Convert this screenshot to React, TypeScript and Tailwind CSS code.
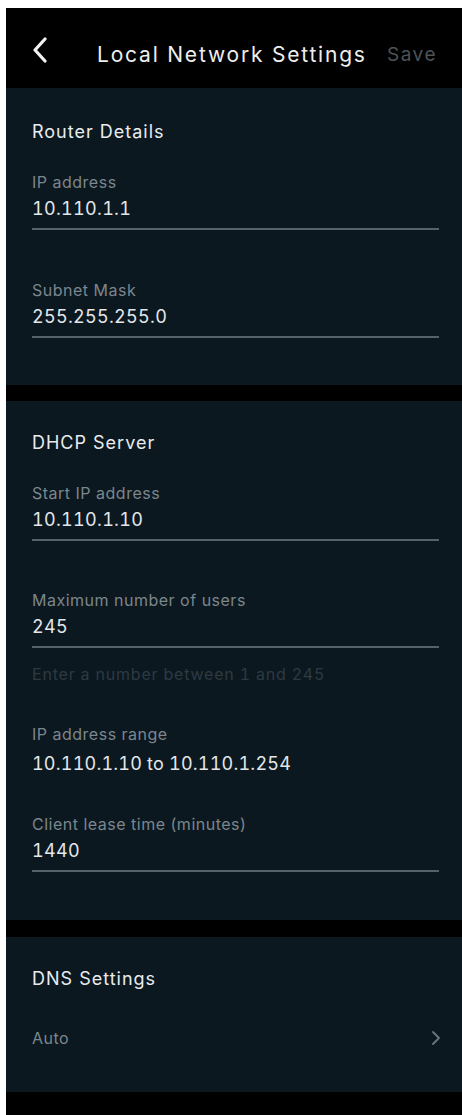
import type { ReactNode } from 'react';

const FONT = { fontFamily: 'Inter, "Noto Sans", Arial, sans-serif' };

function Field({ label, value }: { label: string; value: string }) {
  return (
    <div>
      <div className="text-[16px] leading-[20px] tracking-[0.5px] text-[#7c868d]">{label}</div>
      <div className="mt-[5px] text-[18px] leading-[24px] tracking-[0.3px] tabular-nums text-[#e4e7ea]">{value}</div>
      <div className="mt-[7px] h-[2px] bg-[#56626a]" />
    </div>
  );
}

function Section({ children, className }: { children: ReactNode; className: string }) {
  return <section className={`bg-[#0b1820] pl-[26px] pr-[23px] ${className}`}>{children}</section>;
}

function SectionTitle({ children }: { children: ReactNode }) {
  return <h2 className="text-[18px] leading-[22px] tracking-[1px] text-[#e9ecee]">{children}</h2>;
}

export default function App() {
  return (
    <div className="min-h-[1115px] bg-white pl-[6px] pt-[8px]" style={FONT}>
      <div className="bg-black pb-[23px]">
        <header className="h-[80px] flex items-center pl-[25px] pr-[25px] pt-[14px]">
          <svg width="18" height="26" viewBox="0 0 18 26" fill="none" className="shrink-0 mt-[-11px]">
            <path d="M14 2 L4 13 L14 24" stroke="#f2f2f2" strokeWidth="3.2" strokeLinecap="round" strokeLinejoin="round" />
          </svg>
          <h1 className="ml-[48px] text-[21px] leading-[28px] tracking-[1.8px] text-[#eeeeee]">Local Network Settings</h1>
          <span className="ml-auto text-[19px] leading-[28px] tracking-[1.5px] text-[#4d5358]">Save</span>
        </header>

        <Section className="h-[297px] pt-[33px]">
          <SectionTitle>Router Details</SectionTitle>
          <div className="mt-[29px]">
            <Field label="IP address" value="10.110.1.1" />
          </div>
          <div className="mt-[50px]">
            <Field label="Subnet Mask" value="255.255.255.0" />
          </div>
        </Section>

        <div className="h-[16px]" />

        <Section className="h-[519px] pt-[31px]">
          <SectionTitle>DHCP Server</SectionTitle>
          <div className="mt-[29px]">
            <Field label="Start IP address" value="10.110.1.10" />
          </div>
          <div className="mt-[49px]">
            <Field label="Maximum number of users" value="245" />
          </div>
          <div className="mt-[16px] text-[16px] leading-[20px] tracking-[0.8px] tabular-nums text-[#2e3a42]">
            Enter a number between 1 and 245
          </div>
          <div className="mt-[40px] text-[16px] leading-[20px] tracking-[0.5px] text-[#7c868d]">IP address range</div>
          <div className="mt-[8px] text-[18px] leading-[24px] tracking-[0.2px] tabular-nums text-[#e4e7ea]">
            10.110.1.10 to 10.110.1.254
          </div>
          <div className="mt-[38px]">
            <Field label="Client lease time (minutes)" value="1440" />
          </div>
        </Section>

        <div className="h-[17px]" />

        <Section className="h-[155px] pt-[31px]">
          <SectionTitle>DNS Settings</SectionTitle>
          <div className="mt-[38px] flex items-center justify-between">
            <span className="text-[16px] leading-[20px] tracking-[0.5px] text-[#7c868d]">Auto</span>
            <svg width="10" height="16" viewBox="0 0 10 16" fill="none" className="mr-[-2px]">
              <path d="M2 2 L8 8 L2 14" stroke="#6b757c" strokeWidth="1.8" strokeLinecap="round" strokeLinejoin="round" />
            </svg>
          </div>
        </Section>
      </div>
    </div>
  );
}
